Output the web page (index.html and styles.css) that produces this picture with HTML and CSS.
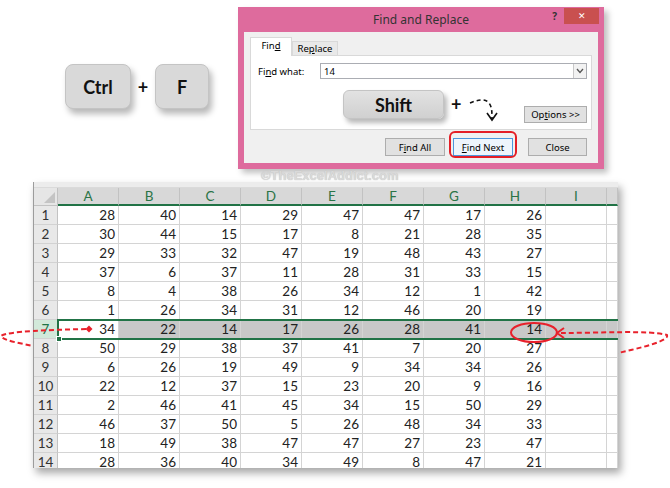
FILE: index.html
```html
<!DOCTYPE html>
<html>
<head>
<meta charset="utf-8">
<title>Find and Replace</title>
<link rel="stylesheet" href="styles.css">
</head>
<body>
<div class="page">
  <div class="top">
    <div class="keys">
      <div class="key key-ctrl">Ctrl</div>
      <div class="plus">+</div>
      <div class="key key-f">F</div>
    </div>
    <div class="dialog">
      <div class="titlebar">
        <div></div>
        <div class="title">Find and Replace</div>
        <div class="tctrls"><span class="help">?</span><span class="xbtn">✕</span></div>
      </div>
      <div class="dbody">
        <div class="tabs">
          <div class="tab tab-on">Fin<u>d</u></div>
          <div class="tab tab-off">Re<u>p</u>lace</div>
        </div>
        <div class="panel">
          <div class="frow">
            <div class="flabel">Fi<u>n</u>d what:</div>
            <div class="finput"><span>14</span><span class="dd"><svg width="8" height="6" viewBox="0 0 8 6"><path d="M1 1 L4 4.5 L7 1" fill="none" stroke="#555" stroke-width="1.3"/></svg></span></div>
          </div>
          <div class="srow">
            <div class="key key-shift">Shift</div>
            <div class="plus plus-s">+</div>
            <svg class="darrow" width="34" height="32" viewBox="0 0 34 32">
              <path d="M2 9 C 9 6, 17 4, 21 9 C 24 13, 24 18, 24 25" fill="none" stroke="#111" stroke-width="1.6" stroke-dasharray="4 3"/>
              <path d="M19 19 L24 26 L29 19" fill="none" stroke="#111" stroke-width="1.6"/>
            </svg>
            <div class="btn btn-opt">Op<u>t</u>ions &gt;&gt;</div>
          </div>
        </div>
        <div class="brow">
          <div class="btn">F<u>i</u>nd All</div>
          <div class="btn btn-def"><u>F</u>ind Next<span class="ring"></span></div>
          <div class="btn btn-close">Close</div>
        </div>
      </div>
    </div>
  </div>
  <div class="wm">©TheExcelAddict.com</div>
  <div class="sheet">
    <div class="strip"></div>
    <div class="row hrow">
      <div class="corner"><span class="tri"></span></div>
      <div class="ch">A</div><div class="ch">B</div><div class="ch">C</div><div class="ch">D</div><div class="ch">E</div><div class="ch">F</div><div class="ch">G</div><div class="ch">H</div><div class="ch">I</div><div class="ch"></div>
    </div>
    <div class="row"><div class="rh">1</div><div class="c">28</div><div class="c">40</div><div class="c">14</div><div class="c">29</div><div class="c">47</div><div class="c">47</div><div class="c">17</div><div class="c">26</div><div class="c"></div><div class="c"></div></div>
    <div class="row"><div class="rh">2</div><div class="c">30</div><div class="c">44</div><div class="c">15</div><div class="c">17</div><div class="c">8</div><div class="c">21</div><div class="c">28</div><div class="c">35</div><div class="c"></div><div class="c"></div></div>
    <div class="row"><div class="rh">3</div><div class="c">29</div><div class="c">33</div><div class="c">32</div><div class="c">47</div><div class="c">19</div><div class="c">48</div><div class="c">43</div><div class="c">27</div><div class="c"></div><div class="c"></div></div>
    <div class="row"><div class="rh">4</div><div class="c">37</div><div class="c">6</div><div class="c">37</div><div class="c">11</div><div class="c">28</div><div class="c">31</div><div class="c">33</div><div class="c">15</div><div class="c"></div><div class="c"></div></div>
    <div class="row"><div class="rh">5</div><div class="c">8</div><div class="c">4</div><div class="c">38</div><div class="c">26</div><div class="c">34</div><div class="c">12</div><div class="c">1</div><div class="c">42</div><div class="c"></div><div class="c"></div></div>
    <div class="row"><div class="rh">6</div><div class="c">1</div><div class="c">26</div><div class="c">34</div><div class="c">31</div><div class="c">12</div><div class="c">46</div><div class="c">20</div><div class="c">19</div><div class="c"></div><div class="c"></div></div>
    <div class="row row-sel"><div class="rh rh-sel">7</div><div class="c">34</div><div class="c g">22</div><div class="c g">14</div><div class="c g">17</div><div class="c g">26</div><div class="c g">28</div><div class="c g">41</div><div class="c g">14</div><div class="c g"></div><div class="c g"></div><div class="selbox"><span class="handle"></span></div></div>
    <div class="row"><div class="rh">8</div><div class="c">50</div><div class="c">29</div><div class="c">38</div><div class="c">37</div><div class="c">41</div><div class="c">7</div><div class="c">20</div><div class="c">27</div><div class="c"></div><div class="c"></div></div>
    <div class="row"><div class="rh">9</div><div class="c">6</div><div class="c">26</div><div class="c">19</div><div class="c">49</div><div class="c">9</div><div class="c">34</div><div class="c">34</div><div class="c">26</div><div class="c"></div><div class="c"></div></div>
    <div class="row"><div class="rh">10</div><div class="c">22</div><div class="c">12</div><div class="c">37</div><div class="c">15</div><div class="c">23</div><div class="c">20</div><div class="c">9</div><div class="c">16</div><div class="c"></div><div class="c"></div></div>
    <div class="row"><div class="rh">11</div><div class="c">2</div><div class="c">46</div><div class="c">41</div><div class="c">45</div><div class="c">34</div><div class="c">15</div><div class="c">50</div><div class="c">29</div><div class="c"></div><div class="c"></div></div>
    <div class="row"><div class="rh">12</div><div class="c">46</div><div class="c">37</div><div class="c">50</div><div class="c">5</div><div class="c">26</div><div class="c">48</div><div class="c">34</div><div class="c">33</div><div class="c"></div><div class="c"></div></div>
    <div class="row"><div class="rh">13</div><div class="c">18</div><div class="c">49</div><div class="c">38</div><div class="c">47</div><div class="c">47</div><div class="c">27</div><div class="c">23</div><div class="c">47</div><div class="c"></div><div class="c"></div></div>
    <div class="row"><div class="rh">14</div><div class="c">28</div><div class="c">36</div><div class="c">40</div><div class="c">34</div><div class="c">49</div><div class="c">8</div><div class="c">47</div><div class="c">21</div><div class="c"></div><div class="c"></div></div>
  </div>
  <svg class="marks" width="670" height="488" viewBox="0 0 670 488">
    <g fill="none" stroke="#e8212b" stroke-width="2">
      <path d="M86 329 C 50 330, 8 331, 1 336 C 4 341, 20 343, 33 346" stroke-dasharray="5 3"/>
      <path d="M561 333 C 600 333, 650 330, 667 335 C 670 341, 640 348, 618 353" stroke-dasharray="5 3"/>
      <path d="M564 328 L557 333 L564 338"/>
      <ellipse cx="534" cy="332.5" rx="23" ry="9.5"/>
    </g>
    <path d="M89 325.5 L92.5 329 L89 332.5 L85.5 329 Z" fill="#e8212b"/>
  </svg>
</div>
</body>
</html>
```
FILE: styles.css
```css
* { box-sizing: border-box; }
body { margin: 0; background: #fff; font-family: "Lato", "Liberation Sans", sans-serif; }
.page { position: relative; width: 670px; height: 488px; overflow: hidden; background: #fff; }

.top { display: flex; align-items: flex-start; padding: 7px 0 0 65px; height: 169px; }
.keys { display: flex; align-items: center; margin-top: 57px; }
.key {
  display: flex; align-items: center; justify-content: center;
  height: 45px; background: #d9d9d9; border: 1px solid #c4c4c4; border-radius: 8px;
  box-shadow: 3px 5px 6px rgba(0,0,0,.28);
  font-family: "Lato", "Liberation Sans", sans-serif; font-weight: 700; font-size: 18px; color: #111;
}
.key-ctrl { width: 66px; }
.key-f { width: 54px; }
.plus { width: 24px; text-align: center; font-family: "Lato", "Liberation Sans", sans-serif; font-weight: 700; font-size: 18px; color: #111; }

.dialog {
  margin-left: 29px; width: 366px; height: 162px; background: #de6b9d;
  padding: 0 6px 6px; display: flex; flex-direction: column;
  box-shadow: 4px 4px 6px rgba(0,0,0,.25);
  font-family: "Noto Sans", "Open Sans", sans-serif; font-size: 9.5px; color: #000;
}
.titlebar { height: 25px; display: grid; grid-template-columns: 1fr auto 1fr; }
.title { font-size: 12px; color: #333; line-height: 25px; }
.tctrls { display: flex; justify-content: flex-end; align-items: flex-start; padding-top: 1px; margin-right: -1px; }
.help { font-size: 10px; font-weight: 700; color: #333; margin-right: 7px; line-height: 16px; }
.xbtn { width: 35px; height: 16px; background: #c9504f; color: #fff; font-size: 9px; text-align: center; line-height: 16px; }

.dbody { flex: 1; background: #f0f0f0; padding: 5px 6px 0; }
.tabs { display: flex; align-items: flex-end; height: 18px; }
.tab { text-align: center; border: 1px solid #d9d9d9; border-bottom: none; }
.tab-on { width: 42px; height: 19px; background: #fff; line-height: 16px; margin-bottom: -1px; position: relative; z-index: 1; }
.tab-off { width: 46px; height: 14px; background: #e9e9e9; line-height: 13px; }
.panel { background: #fff; border: 1px solid #d9d9d9; height: 75px; padding: 7px 4px 0 7px; }
.frow { display: flex; align-items: center; height: 16px; }
.flabel { width: 62px; }
.finput { flex: 1; height: 16px; border: 1px solid #abadb3; display: flex; align-items: center; padding-left: 3px; }
.dd { margin-left: auto; width: 13px; height: 14px; border-left: 1px solid #c8c8c8; background: #f2f2f2; display: flex; align-items: center; justify-content: center; }
.srow { display: flex; align-items: flex-start; margin-top: 11px; }
.key-shift {
  margin-left: 85px; width: 101px; height: 29px; border-radius: 6px;
  background: linear-gradient(#e2e2e2, #d0d0d0); border: 1px solid #c4c4c4;
  box-shadow: 3px 4px 5px rgba(0,0,0,.28);
}
.plus-s { width: 10px; margin-left: 7px; margin-top: 3px; }
.darrow { margin-left: 7px; margin-top: 4px; }
.btn {
  height: 18px; width: 60px; background: #e1e1e1; border: 1px solid #adadad;
  display: flex; align-items: center; justify-content: center; position: relative;
}
.btn-opt { margin-left: auto; margin-top: 16px; width: 63px; height: 17px; }
.brow { display: flex; justify-content: flex-end; margin-top: 8px; padding-right: 5px; }
.btn-def { margin-left: 8px; border-color: #4d96dc; background: #eef5fc; }
.btn-close { margin-left: 15px; width: 59px; }
.ring { position: absolute; top: -8px; bottom: -3px; left: -5px; right: -5px; border: 2px solid #e41e26; border-radius: 6px; }

.wm {
  height: 13px; padding-left: 261px; font-family: "Liberation Sans", Arial, sans-serif;
  font-weight: 700; font-size: 13px; line-height: 13px; color: #d9d9d9;
  text-shadow: 0 0 1px #b8b8b8;
}

.sheet {
  margin-left: 33px; width: 585px; height: 286px; overflow: hidden;
  display: flex; flex-direction: column;
  border-left: 1px solid #9c9c9c; background: #fff;
  box-shadow: 3px 5px 8px rgba(0,0,0,.35);
  font-family: "Lato", "Liberation Sans", sans-serif; font-size: 13.5px; color: #222;
}
.strip { flex: 0 0 6px; background: #ececec; border-bottom: 1px solid #dadada; }
.row { display: grid; grid-template-columns: 24px repeat(9, 61px) 11px; flex: 0 0 19px; height: 19px; }
.hrow { flex: 0 0 18px; height: 18px; }
.row-sel { position: relative; }
.corner { background: #e6e6e6; border-right: 1px solid #c2c2c2; border-bottom: 1px solid #c2c2c2; position: relative; }
.tri { position: absolute; right: 2px; bottom: 2px; width: 0; height: 0; border-left: 11px solid transparent; border-bottom: 11px solid #c4c4c4; }
.ch { background: #d8d8d8; border-right: 1px solid #c2c2c2; border-bottom: 2px solid #217346; color: #2a7446; text-align: center; line-height: 16px; }
.rh { background: #e8e8e8; border-right: 1px solid #c2c2c2; border-bottom: 1px solid #d2d2d2; text-align: center; line-height: 18px; color: #333; }
.rh-sel { background: #d2e9da; color: #217346; }
.c { border-right: 1px solid #d4d4d4; border-bottom: 1px solid #d4d4d4; text-align: right; padding-right: 3px; line-height: 18px; overflow: hidden; }
.c.g { background: #c8c8c8; }
.selbox { position: absolute; left: 23px; right: -4px; top: -1px; bottom: -1px; border: 2px solid #217346; }
.handle { position: absolute; left: -3px; bottom: -4px; width: 6px; height: 6px; background: #217346; border: 1px solid #fff; }

.marks { position: absolute; left: 0; top: 0; z-index: 5; pointer-events: none; }
```
